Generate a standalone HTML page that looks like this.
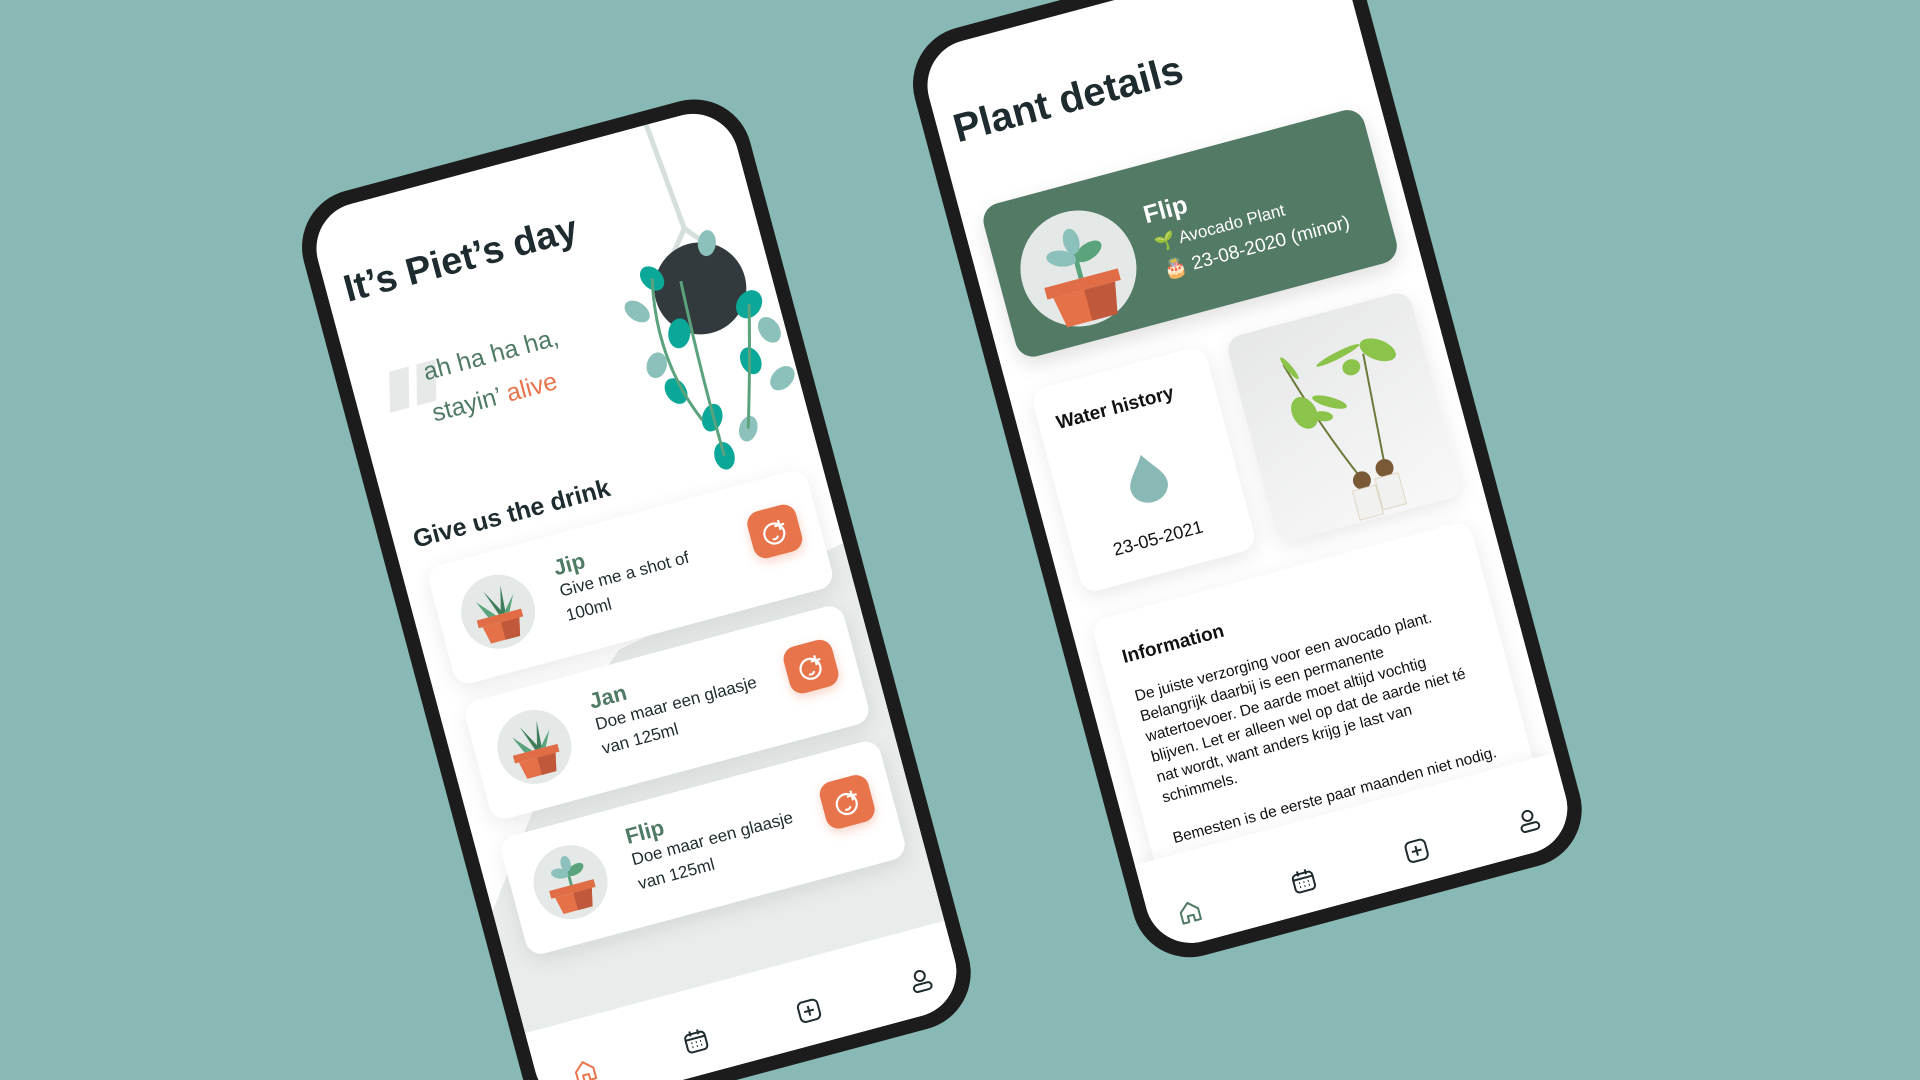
<!DOCTYPE html>
<html><head><meta charset="utf-8"><style>
*{margin:0;padding:0;box-sizing:border-box}
html,body{width:1920px;height:1080px;overflow:hidden}
body{background:#88b9b5;font-family:"Liberation Sans",sans-serif}
#wrap{position:relative;width:1920px;height:1080px;overflow:hidden;background:#88b9b5}
.phone{position:absolute;width:462px;height:960px;background:#1c1c1c;border-radius:58px;transform-origin:0 0;transform:rotate(-15deg)}
.screen{position:absolute;left:14px;top:14px;right:14px;bottom:14px;background:#fff;border-radius:46px;overflow:hidden}
.abs{position:absolute;white-space:nowrap;line-height:1}
.card{position:absolute;background:#fff;border-radius:16px;box-shadow:0 6px 22px rgba(0,0,0,.09)}
.btn{position:absolute;width:50px;height:48px;border-radius:13px;background:#e8744b;box-shadow:0 4px 10px rgba(232,116,75,.3)}
.nav{position:absolute;left:0;right:0;top:846px;bottom:0;background:#fff}
.ic{position:absolute;width:28px;height:28px}
</style></head><body><div id="wrap">

<!-- LEFT PHONE -->
<div class="phone" style="left:289px;top:206px">
 <div class="screen">
  <svg style="position:absolute;left:0;top:0" width="434" height="932">
   <polygon points="190,500 434,455 434,860 0,860 0,720 120,560" fill="#e8ecea"/>
   <polygon points="40,172 60,172 50,212 30,212" fill="#e6e9e8"/>
   <polygon points="68,172 88,172 78,212 58,212" fill="#e6e9e8"/>
   <path d="M352,0 L362,110 L330,150 M362,110 L395,150" stroke="#d5dfdc" stroke-width="5" fill="none"/>
   <circle cx="362" cy="172" r="46" fill="#323a3d"/>
   <g fill="#0ba899">
    <ellipse cx="318" cy="150" rx="10" ry="14" transform="rotate(-30 318 150)"/>
    <ellipse cx="330" cy="210" rx="11" ry="15" transform="rotate(20 330 210)"/>
    <ellipse cx="312" cy="265" rx="10" ry="14" transform="rotate(-20 312 265)"/>
    <ellipse cx="340" cy="300" rx="10" ry="14" transform="rotate(30 340 300)"/>
    <ellipse cx="392" cy="255" rx="10" ry="14" transform="rotate(-10 392 255)"/>
    <ellipse cx="405" cy="200" rx="12" ry="15" transform="rotate(50 405 200)"/>
    <ellipse cx="342" cy="340" rx="10" ry="14"/>
   </g>
   <g fill="#8cc1bb">
    <ellipse cx="295" cy="178" rx="9" ry="14" transform="rotate(-40 295 178)"/>
    <ellipse cx="300" cy="235" rx="10" ry="13" transform="rotate(30 300 235)"/>
    <ellipse cx="380" cy="130" rx="9" ry="13" transform="rotate(20 380 130)"/>
    <ellipse cx="418" cy="230" rx="10" ry="14" transform="rotate(-20 418 230)"/>
    <ellipse cx="418" cy="280" rx="10" ry="14" transform="rotate(60 418 280)"/>
    <ellipse cx="372" cy="320" rx="9" ry="13" transform="rotate(30 372 320)"/>
   </g>
   <path d="M318,150 Q300,230 330,300 M405,200 Q390,260 372,320 M345,160 Q340,260 342,340" stroke="#5aa37d" stroke-width="3" fill="none"/>
  </svg>
  <div class="abs" style="left:18px;top:63px;font-size:38px;font-weight:700;color:#1e2b2f">It’s Piet’s day</div>
  <div class="abs" style="left:73px;top:170px;font-size:25px;color:#4f7a64">ah ha ha ha,</div>
  <div class="abs" style="left:71px;top:212px;font-size:25px;color:#4f7a64">stayin’ <span style="color:#e8744b">alive</span></div>
  <div class="abs" style="left:20px;top:329px;font-size:25px;font-weight:700;color:#1e2b2f">Give us the drink</div>

  <div class="card" style="left:24px;top:372px;width:392px;height:122px">
   <svg style="position:absolute;left:22px;top:23px" width="74" height="74" viewBox="0 0 74 74"><circle cx="37" cy="37" r="37" fill="#e4e9e7"/><path d="M37,40 L28,14 L40,36 L46,12 L44,40 Z" fill="#3f7d5c"/><path d="M26,40 L18,22 L34,40Z M48,40 L56,24 L42,40Z" fill="#5aa37d"/><rect x="14" y="40" width="46" height="8" fill="#e06d45"/><path d="M18,48 L56,48 L52,66 L22,66Z" fill="#e47148"/><path d="M37,48 L56,48 L52,66 L37,66Z" fill="#c0583b"/></svg>
   <div class="abs" style="left:124px;top:22px;font-size:22px;font-weight:700;color:#4f7a64">Jip</div>
   <div class="abs" style="left:124px;top:48px;font-size:17px;color:#1e2b2f">Give me a shot of</div>
   <div class="abs" style="left:124px;top:73px;font-size:17px;color:#1e2b2f">100ml</div>
   <div class="btn" style="right:20px;top:30px"><svg width="50" height="48"><circle cx="24" cy="26" r="10" stroke="#fff" stroke-width="2.2" fill="none"/><path d="M31,14 v10 M26,19 h10" stroke="#fff" stroke-width="2.2"/><path d="M27,29 q-2,4 -6,2" stroke="#fff" stroke-width="2" fill="none"/></svg></div>
  </div>
  <div class="card" style="left:24px;top:512px;width:392px;height:122px">
   <svg style="position:absolute;left:22px;top:23px" width="74" height="74" viewBox="0 0 74 74"><circle cx="37" cy="37" r="37" fill="#e4e9e7"/><path d="M37,40 L28,14 L40,36 L46,12 L44,40 Z" fill="#3f7d5c"/><path d="M26,40 L18,22 L34,40Z M48,40 L56,24 L42,40Z" fill="#5aa37d"/><rect x="14" y="40" width="46" height="8" fill="#e06d45"/><path d="M18,48 L56,48 L52,66 L22,66Z" fill="#e47148"/><path d="M37,48 L56,48 L52,66 L37,66Z" fill="#c0583b"/></svg>
   <div class="abs" style="left:124px;top:20px;font-size:22px;font-weight:700;color:#4f7a64">Jan</div>
   <div class="abs" style="left:124px;top:46px;font-size:17px;color:#1e2b2f">Doe maar een glaasje</div>
   <div class="abs" style="left:124px;top:71px;font-size:17px;color:#1e2b2f">van 125ml</div>
   <div class="btn" style="right:20px;top:30px"><svg width="50" height="48"><circle cx="24" cy="26" r="10" stroke="#fff" stroke-width="2.2" fill="none"/><path d="M31,14 v10 M26,19 h10" stroke="#fff" stroke-width="2.2"/><path d="M27,29 q-2,4 -6,2" stroke="#fff" stroke-width="2" fill="none"/></svg></div>
  </div>
  <div class="card" style="left:24px;top:652px;width:392px;height:122px">
   <svg style="position:absolute;left:22px;top:23px" width="74" height="74" viewBox="0 0 74 74"><circle cx="37" cy="37" r="37" fill="#e4e9e7"/><path d="M37,42 V24" stroke="#5aa37d" stroke-width="3"/><ellipse cx="29" cy="26" rx="9" ry="5" fill="#8cc1bb" transform="rotate(20 29 26)"/><ellipse cx="45" cy="26" rx="9" ry="5" fill="#5aa37d" transform="rotate(-20 45 26)"/><ellipse cx="37" cy="18" rx="5" ry="8" fill="#8cc1bb"/><rect x="14" y="40" width="46" height="8" fill="#e06d45"/><path d="M18,48 L56,48 L52,66 L22,66Z" fill="#e47148"/><path d="M37,48 L56,48 L52,66 L37,66Z" fill="#c0583b"/></svg>
   <div class="abs" style="left:124px;top:20px;font-size:22px;font-weight:700;color:#4f7a64">Flip</div>
   <div class="abs" style="left:124px;top:46px;font-size:17px;color:#1e2b2f">Doe maar een glaasje</div>
   <div class="abs" style="left:124px;top:71px;font-size:17px;color:#1e2b2f">van 125ml</div>
   <div class="btn" style="right:20px;top:30px"><svg width="50" height="48"><circle cx="24" cy="26" r="10" stroke="#fff" stroke-width="2.2" fill="none"/><path d="M31,14 v10 M26,19 h10" stroke="#fff" stroke-width="2.2"/><path d="M27,29 q-2,4 -6,2" stroke="#fff" stroke-width="2" fill="none"/></svg></div>
  </div>

  <div class="nav">
   <svg class="ic" style="left:34px;top:38px" viewBox="0 0 28 28"><path d="M5,13 L14,5 L23,13 V24 H17 V18 H11 V24 H5 Z" stroke="#e8744b" stroke-width="2" fill="none" stroke-linejoin="round"/></svg>
   <svg class="ic" style="left:149px;top:38px" viewBox="0 0 28 28"><rect x="4" y="6" width="20" height="18" rx="4" stroke="#1e2b2f" stroke-width="2" fill="none"/><path d="M4,11 H24 M10,3 V8 M18,3 V8" stroke="#1e2b2f" stroke-width="2"/><path d="M9,15h1M13.5,15h1M18,15h1M9,19h1M13.5,19h1M18,19h1" stroke="#1e2b2f" stroke-width="2"/></svg>
   <svg class="ic" style="left:266px;top:38px" viewBox="0 0 28 28"><rect x="4" y="4" width="20" height="20" rx="5" stroke="#1e2b2f" stroke-width="2" fill="none"/><path d="M14,9 V19 M9,14 H19" stroke="#1e2b2f" stroke-width="2"/></svg>
   <svg class="ic" style="left:382px;top:38px" viewBox="0 0 28 28"><circle cx="14" cy="9" r="5" stroke="#1e2b2f" stroke-width="2" fill="none"/><rect x="5" y="17" width="18" height="7" rx="3.5" stroke="#1e2b2f" stroke-width="2" fill="none"/></svg>
  </div>
 </div>
</div>

<!-- RIGHT PHONE -->
<div class="phone" style="left:900px;top:43px">
 <div class="screen">
  <div class="abs" style="left:16px;top:64px;font-size:40px;font-weight:700;color:#1e2b2f">Plant details</div>
  <div class="card" style="left:20px;top:166px;width:394px;height:158px;background:#527a65;border-radius:18px;box-shadow:0 8px 20px rgba(0,0,0,.12)">
   <svg style="position:absolute;left:22px;top:26px" width="116" height="116" viewBox="0 0 116 116"><circle cx="58" cy="58" r="58" fill="#e4e9e7"/><path d="M58,72 V40" stroke="#5aa37d" stroke-width="5"/><ellipse cx="44" cy="44" rx="15" ry="8" fill="#8cc1bb" transform="rotate(20 44 44)"/><ellipse cx="72" cy="44" rx="15" ry="8" fill="#5aa37d" transform="rotate(-20 72 44)"/><ellipse cx="58" cy="30" rx="8" ry="13" fill="#8cc1bb"/><rect x="20" y="68" width="76" height="12" fill="#e06d45"/><path d="M26,80 L90,80 L84,112 L32,112Z" fill="#e47148"/><path d="M58,80 L90,80 L84,112 L58,112Z" fill="#c0583b"/></svg>
   <div class="abs" style="left:157px;top:38px;font-size:25px;font-weight:700;color:#fff">Flip</div>
   <div class="abs" style="left:160px;top:72px;font-size:17px;color:#fff"><span style="color:#7cc24f">🌱</span> Avocado Plant</div>
   <div class="abs" style="left:162px;top:100px;font-size:19px;color:#fff">🎂 23-08-2020 (minor)</div>
  </div>
  <div class="card" style="left:21px;top:356px;width:180px;height:210px">
   <div class="abs" style="left:18px;top:29px;font-size:19px;font-weight:700;color:#111">Water history</div>
   <svg style="position:absolute;left:70px;top:88px" width="42" height="52" viewBox="0 0 42 52"><path d="M21,2 C28,14 40,24 40,34 A19,17 0 0 1 2,34 C2,24 14,14 21,2Z" fill="#88b9b5"/></svg>
   <div class="abs" style="left:40px;top:166px;font-size:18px;color:#111">23-05-2021</div>
  </div>
  <div class="card" style="left:223px;top:356px;width:190px;height:212px;background:linear-gradient(160deg,#e6e7e7,#f8f8f8);overflow:hidden">
   <svg width="190" height="212"><path d="M50,40 Q70,110 95,168 M130,50 L122,162" stroke="#6b7a3a" stroke-width="2" fill="none"/><g fill="#8cc34a"><ellipse cx="58" cy="92" rx="12" ry="17" transform="rotate(-15 58 92)"/><ellipse cx="85" cy="88" rx="18" ry="5" transform="rotate(30 85 88)"/><ellipse cx="75" cy="100" rx="10" ry="5" transform="rotate(20 75 100)"/><ellipse cx="145" cy="50" rx="19" ry="10" transform="rotate(35 145 50)"/><ellipse cx="115" cy="60" rx="9" ry="8"/><ellipse cx="105" cy="45" rx="24" ry="3.5" transform="rotate(-12 105 45)"/><ellipse cx="55" cy="45" rx="3" ry="14" transform="rotate(-25 55 45)"/></g><circle cx="96" cy="172" r="9" fill="#7a5a36"/><circle cx="121" cy="166" r="9" fill="#7a5a36"/><rect x="84" y="180" width="24" height="30" fill="#f1f2f0" stroke="#e0d6c4"/><rect x="109" y="174" width="24" height="32" fill="#f1f2f0" stroke="#e0d6c4"/></svg>
  </div>
  <div class="card" style="left:20px;top:594px;width:392px;height:400px">
   <div class="abs" style="left:22px;top:34px;font-size:19px;font-weight:700;color:#111">Information</div>
   <div class="abs" style="left:24px;top:74px;font-size:15.5px;line-height:21px;color:#111">De juiste verzorging voor een avocado plant.<br>Belangrijk daarbij is een permanente<br>watertoevoer. De aarde moet altijd vochtig<br>blijven. Let er alleen wel op dat de aarde niet té<br>nat wordt, want anders krijg je last van<br>schimmels.<br><br>Bemesten is de eerste paar maanden niet nodig.</div>
  </div>
  <div class="nav" style="top:841px;box-shadow:0 -4px 12px rgba(0,0,0,.04)">
   <svg class="ic" style="left:27px;top:45px" viewBox="0 0 28 28"><path d="M5,13 L14,5 L23,13 V24 H17 V18 H11 V24 H5 Z" stroke="#4f7a64" stroke-width="2" fill="none" stroke-linejoin="round"/></svg>
   <svg class="ic" style="left:145px;top:45px" viewBox="0 0 28 28"><rect x="4" y="6" width="20" height="18" rx="4" stroke="#1e2b2f" stroke-width="2" fill="none"/><path d="M4,11 H24 M10,3 V8 M18,3 V8" stroke="#1e2b2f" stroke-width="2"/><path d="M9,15h1M13.5,15h1M18,15h1M9,19h1M13.5,19h1M18,19h1" stroke="#1e2b2f" stroke-width="2"/></svg>
   <svg class="ic" style="left:262px;top:45px" viewBox="0 0 28 28"><rect x="4" y="4" width="20" height="20" rx="5" stroke="#1e2b2f" stroke-width="2" fill="none"/><path d="M14,9 V19 M9,14 H19" stroke="#1e2b2f" stroke-width="2"/></svg>
   <svg class="ic" style="left:378px;top:45px" viewBox="0 0 28 28"><circle cx="14" cy="9" r="5" stroke="#1e2b2f" stroke-width="2" fill="none"/><rect x="5" y="17" width="18" height="7" rx="3.5" stroke="#1e2b2f" stroke-width="2" fill="none"/></svg>
  </div>
 </div>
</div>
</div></body></html>
